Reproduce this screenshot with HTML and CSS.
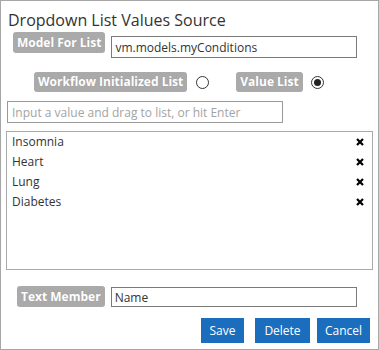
FILE: index.html
```html
<!DOCTYPE html>
<html>
<head>
	<meta charset="UTF-8">
	<title>Dropdown List Values Source</title>
	<link rel="stylesheet" href="styles.css">
</head>
<body>

	<div class="dialog">
		<h2 class="title">Dropdown List Values Source</h2>

		<div class="row model-row">
			<span class="badge">Model For List</span>
			<input class="field" type="text" value="vm.models.myConditions">
		</div>

		<div class="row source-row">
			<span class="badge">Workflow Initialized List</span>
			<span class="radio"></span>
			<span class="badge">Value List</span>
			<span class="radio checked"></span>
		</div>

		<input class="field add-field" type="text" placeholder="Input a value and drag to list, or hit Enter">

		<ul class="values">
			<li><span>Insomnia</span><svg class="remove" viewBox="0 0 8 8"><path d="M1 1L7 7M7 1L1 7"/></svg></li>
			<li><span>Heart</span><svg class="remove" viewBox="0 0 8 8"><path d="M1 1L7 7M7 1L1 7"/></svg></li>
			<li><span>Lung</span><svg class="remove" viewBox="0 0 8 8"><path d="M1 1L7 7M7 1L1 7"/></svg></li>
			<li><span>Diabetes</span><svg class="remove" viewBox="0 0 8 8"><path d="M1 1L7 7M7 1L1 7"/></svg></li>
		</ul>

		<div class="row member-row">
			<span class="badge">Text Member</span>
			<input class="field" type="text" value="Name">
		</div>

		<div class="actions">
			<button class="btn save">Save</button>
			<button class="btn delete">Delete</button>
			<button class="btn cancel">Cancel</button>
		</div>
	</div>

</body>
</html>
```
FILE: styles.css
```css
* { margin: 0; padding: 0; box-sizing: border-box; }

html, body {
	width: 100%;
	height: 100%;
	background: #fff;
	font-family: "Open Sans", Arial, sans-serif;
	color: #333;
}

.dialog {
	width: 379px;
	height: 350px;
	border: 1px solid #a6a6a6;
	padding: 0 5px 0 5px;
}

.title {
	font-size: 16px;
	font-weight: normal;
	line-height: 20px;
	padding: 9px 0 0 2px;
	color: #333;
}

.row {
	display: flex;
	align-items: flex-start;
}

.badge {
	display: inline-block;
	background: #aaa;
	color: #fff;
	font-size: 12px;
	font-weight: bold;
	line-height: 20px;
	padding: 0 4px;
	border-radius: 3px;
	text-shadow: 0 0 1px #999;
	white-space: nowrap;
}

.field {
	height: 22px;
	border: 1px solid #7a7a7a;
	font-family: "Open Sans", Arial, sans-serif;
	font-size: 12px;
	color: #333;
	padding: 0 3px;
	outline: none;
}

.field::placeholder {
	color: #a3a3a3;
}

.model-row {
	margin-top: 2px;
	padding-left: 7px;
}
.model-row .badge {
	line-height: 21px;
}
.model-row .field {
	margin-left: 6px;
	margin-top: 4px;
	width: 246px;
}

.source-row {
	margin-top: 14px;
	padding-left: 28px;
	align-items: center;
}
.radio {
	width: 13px;
	height: 13px;
	border: 1px solid #333;
	border-radius: 50%;
	margin: 0 27px 0 9px;
	position: relative;
}
.source-row .radio.checked {
	margin-left: 8px;
}
.radio.checked:after {
	content: "";
	position: absolute;
	left: 2px;
	top: 2px;
	width: 7px;
	height: 7px;
	border-radius: 50%;
	background: #222;
}

.add-field {
	display: block;
	width: 276px;
	margin: 9px 0 0 1px;
	border-color: #999;
	padding: 0 4px;
}

.values {
	list-style: none;
	margin-top: 8px;
	height: 139px;
	border: 1px solid #aaa;
	padding: 0 8px 0 5px;
}
.values li {
	display: flex;
	justify-content: space-between;
	align-items: center;
	font-size: 12px;
	line-height: 20px;
	color: #333;
}
.remove {
	width: 8px;
	height: 8px;
	stroke: #000;
	stroke-width: 2.2;
}

.member-row {
	margin-top: 16px;
	padding-left: 11px;
}
.member-row .badge {
	line-height: 21px;
}
.member-row .field {
	margin-left: 6px;
	margin-top: 1px;
	width: 246px;
	height: 20px;
}

.actions {
	display: flex;
	justify-content: flex-end;
	margin-top: 11px;
	padding-right: 3px;
}
.btn {
	height: 25px;
	border: none;
	background: #1a6ebd;
	color: #fff;
	font-family: "Open Sans", Arial, sans-serif;
	font-size: 12px;
}
.save {
	width: 43px;
}
.delete {
	width: 55px;
	margin-left: 11px;
}
.cancel {
	width: 53px;
	margin-left: 7px;
}
```
